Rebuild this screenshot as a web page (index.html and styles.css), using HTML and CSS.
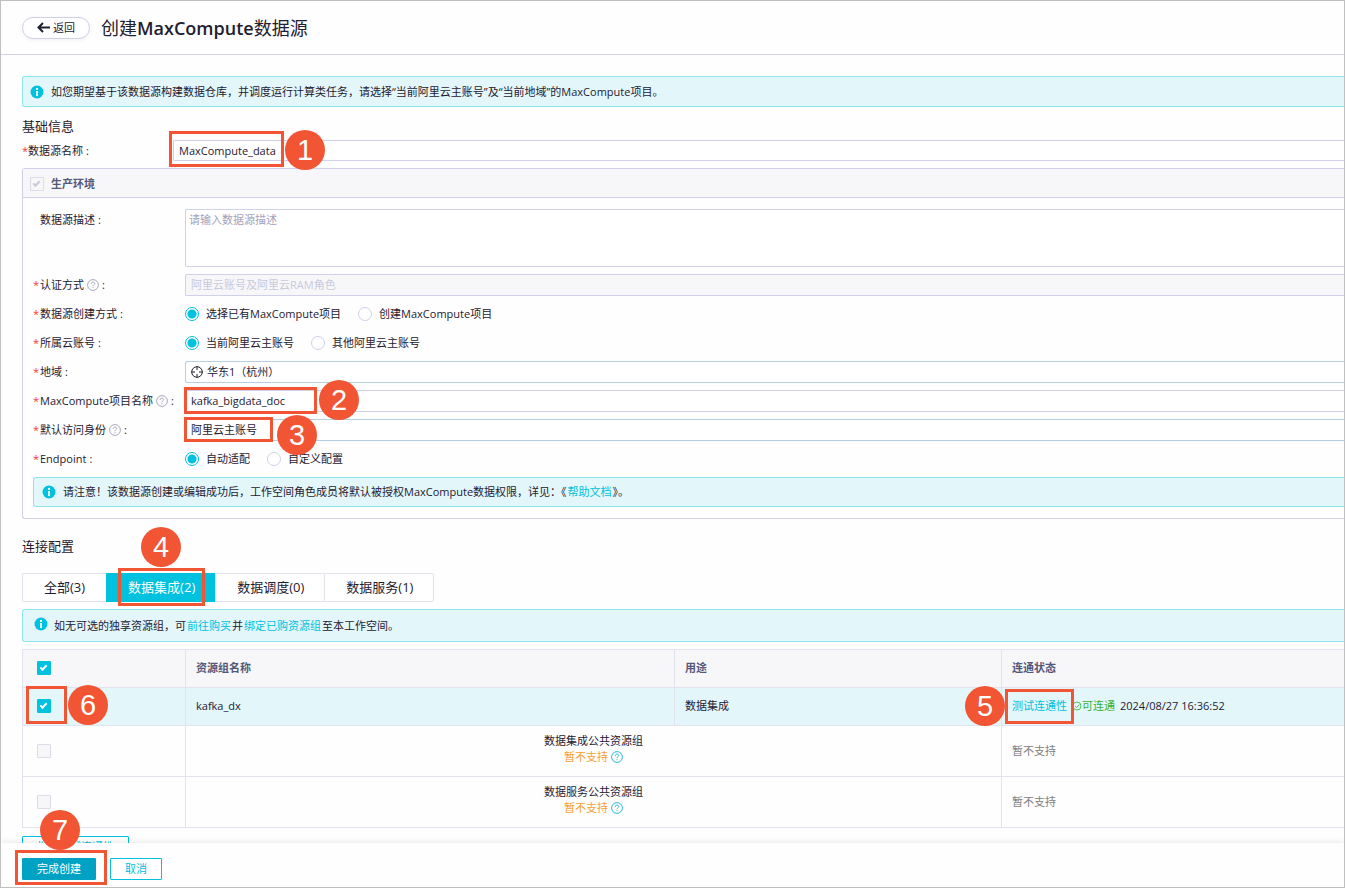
FILE: index.html
```html
<!DOCTYPE html>
<html lang="zh-CN">
<head>
<meta charset="utf-8">
<title>创建MaxCompute数据源</title>
<link rel="stylesheet" href="styles.css">
</head>
<body>
<svg class="defs" aria-hidden="true">
  <symbol id="info" viewBox="0 0 14 14"><circle cx="7" cy="7" r="6.5" fill="#00c1de"/><path d="M6 3h2v2H6zM6 6h2v5H6z" fill="#e3f7fb"/></symbol>
  <symbol id="help" viewBox="0 0 12 12"><circle cx="6" cy="6" r="5.400" fill="none" stroke="currentColor"/><path d="M4.300 4.900C4.300 3.700 5 3.100 6 3.100s1.700.6 1.700 1.500C7.700 5.700 6 5.800 6 7.200M6 8.200v1" fill="none" stroke="currentColor"/></symbol>
</svg>
<div class="app">
  <header class="header">
    <button class="back" type="button">
      <svg width="13" height="11" viewBox="0 0 13 11"><path d="M6 1 1.500 5.500 6 10M2 5.500h11" fill="none" stroke="#1f2030" stroke-width="2"/></svg>返回</button>
    <h1 class="title">创建<span class="product">MaxCompute</span>数据源</h1>
  </header>

  <main class="content">
    <div class="alert alert-top"><svg class="info"><use href="#info"/></svg><span>如您期望基于该数据源构建数据仓库，并调度运行计算类任务，请选择“当前阿里云主账号”及“当前地域”的MaxCompute项目。</span></div>

    <h2 class="section">基础信息</h2>
    <div class="name-row">
      <label class="label" for="name"><i class="star">*</i>数据源名称<span class="colon">:</span></label>
      <div class="field">
        <input class="control" id="name" type="text" value="MaxCompute_data">
        <span class="box box-name"></span><span class="dot dot-name">1</span>
      </div>
    </div>

    <section class="panel">
      <div class="panel-head">
        <input class="check" type="checkbox" id="prod" checked disabled><label for="prod">生产环境</label>
      </div>
      <div class="form">
        <div class="row">
          <label class="label" for="desc"><i class="star"></i>数据源描述<span class="colon">:</span></label>
          <div class="field"><textarea class="control area" id="desc" placeholder="请输入数据源描述"></textarea></div>
        </div>
        <div class="row">
          <label class="label" for="auth"><i class="star">*</i>认证方式<svg class="help"><use href="#help"/></svg><span class="colon">:</span></label>
          <div class="field"><select class="control" id="auth" disabled><option>阿里云账号及阿里云RAM角色</option></select></div>
        </div>
        <div class="row" role="radiogroup" aria-labelledby="mode-label">
          <span class="label" id="mode-label"><i class="star">*</i>数据源创建方式<span class="colon">:</span></span>
          <div class="radios">
            <label class="option"><input class="radio" type="radio" name="mode" checked>选择已有MaxCompute项目</label>
            <label class="option"><input class="radio" type="radio" name="mode">创建MaxCompute项目</label>
          </div>
        </div>
        <div class="row" role="radiogroup" aria-labelledby="account-label">
          <span class="label" id="account-label"><i class="star">*</i>所属云账号<span class="colon">:</span></span>
          <div class="radios">
            <label class="option"><input class="radio" type="radio" name="account" checked>当前阿里云主账号</label>
            <label class="option"><input class="radio" type="radio" name="account">其他阿里云主账号</label>
          </div>
        </div>
        <div class="row">
          <label class="label" for="region"><i class="star">*</i>地域<span class="colon">:</span></label>
          <div class="field">
            <select class="control linked region" id="region"><option>华东1（杭州）</option></select>
            <svg class="target" viewBox="0 0 12 12"><circle cx="6" cy="6" r="5.300"/><path d="M6 .5v3.500M6 8v3.500M.5 6H4M8 6h3.500"/></svg>
          </div>
        </div>
        <div class="row">
          <label class="label" for="project"><i class="star">*</i>MaxCompute项目名称<svg class="help"><use href="#help"/></svg><span class="colon">:</span></label>
          <div class="field">
            <select class="control" id="project"><option>kafka_bigdata_doc</option></select>
            <span class="box box-project"></span><span class="dot dot-project">2</span>
          </div>
        </div>
        <div class="row">
          <label class="label" for="identity"><i class="star">*</i>默认访问身份<svg class="help"><use href="#help"/></svg><span class="colon">:</span></label>
          <div class="field">
            <select class="control linked" id="identity"><option>阿里云主账号</option></select>
            <span class="box box-identity"></span><span class="dot dot-identity">3</span>
          </div>
        </div>
        <div class="row" role="radiogroup" aria-labelledby="endpoint-label">
          <span class="label" id="endpoint-label"><i class="star">*</i>Endpoint<span class="colon">:</span></span>
          <div class="radios">
            <label class="option"><input class="radio" type="radio" name="endpoint" checked>自动适配</label>
            <label class="option"><input class="radio" type="radio" name="endpoint">自定义配置</label>
          </div>
        </div>
        <div class="alert alert-form"><svg class="info"><use href="#info"/></svg><span>请注意！该数据源创建或编辑成功后，工作空间角色成员将默认被授权MaxCompute数据权限，详见：《<a class="link" href="#help-doc">帮助文档</a>》。</span></div>
      </div>
    </section>

    <h2 class="section section-link">连接配置</h2>
    <div class="tabs">
      <button class="tab" type="button">全部(3)</button>
      <button class="tab active" type="button">数据集成(2)<span class="box box-tab"></span><span class="dot dot-tab">4</span></button>
      <button class="tab" type="button">数据调度(0)</button>
      <button class="tab" type="button">数据服务(1)</button>
    </div>
    <div class="alert alert-group"><svg class="info"><use href="#info"/></svg><span>如无可选的独享资源组，可<a class="link" href="#buy">前往购买</a>并<a class="link" href="#bind">绑定已购资源组</a>至本工作空间。</span></div>

    <table class="table">
      <colgroup><col class="col-check"><col class="col-name"><col class="col-use"><col></colgroup>
      <thead>
        <tr><th><input class="check" type="checkbox" aria-label="全选" checked></th><th>资源组名称</th><th>用途</th><th>连通状态</th></tr>
      </thead>
      <tbody>
        <tr class="selected">
          <td><div class="anchor"><input class="check" type="checkbox" aria-label="kafka_dx" checked><span class="box box-check"></span><span class="dot dot-check">6</span></div></td>
          <td>kafka_dx</td>
          <td>数据集成</td>
          <td><div class="anchor status"><a class="test" href="#test">测试连通性</a><svg class="ok" viewBox="0 0 10 10"><circle cx="5" cy="5" r="4"/><path d="m3 5 1.500 1.500L7.500 3.500"/></svg><span class="reach">可连通</span><span>2024/08/27 16:36:52</span><span class="box box-test"></span><span class="dot dot-test">5</span></div></td>
        </tr>
        <tr class="public">
          <td><input class="check" type="checkbox" aria-label="数据集成公共资源组" disabled></td>
          <td class="merged" colspan="2">数据集成公共资源组<div class="warn">暂不支持<svg class="help"><use href="#help"/></svg></div></td>
          <td class="muted">暂不支持</td>
        </tr>
        <tr class="public">
          <td><input class="check" type="checkbox" aria-label="数据服务公共资源组" disabled></td>
          <td class="merged" colspan="2">数据服务公共资源组<div class="warn">暂不支持<svg class="help"><use href="#help"/></svg></div></td>
          <td class="muted">暂不支持</td>
        </tr>
      </tbody>
    </table>
    <button class="btn batch" type="button">批量测试连通性</button>
  </main>

  <footer class="footer">
    <div class="anchor"><button class="btn primary" type="button">完成创建</button><span class="box box-submit"></span><span class="dot dot-submit">7</span></div>
    <button class="btn" type="button">取消</button>
  </footer>
</div>
</body>
</html>
```
FILE: styles.css
```css
* { box-sizing: border-box; }
body {
  margin: 0;
  background: #fefefe;
  color: #1f2030;
  font: 11px/16px "Open Sans", "Noto Sans CJK SC", sans-serif;
}
button, input, select, textarea { font: inherit; color: inherit; margin: 0; }
a { text-decoration: none; }
.defs { position: absolute; width: 0; height: 0; }

.app {
  display: flex;
  flex-direction: column;
  height: 100vh;
  border: 1px solid #c0c0c0;
  overflow: hidden;
}

.header {
  display: flex;
  align-items: center;
  gap: 11px;
  flex: none;
  height: 54px;
  padding-left: 21px;
  border-bottom: 1px solid #d0d3e8;
}
.back {
  display: flex;
  align-items: center;
  justify-content: center;
  gap: 3px;
  width: 68px;
  height: 22px;
  padding: 0;
  border: 1px solid #d0d0e8;
  border-radius: 11px;
  background: #fff;
  box-shadow: 0 1px 4px #0000000f;
}
.title { margin: 0; font-size: 18px; line-height: 26px; font-weight: 400; }
.product { font-weight: 600; }

.content {
  flex: 1;
  min-height: 0;
  padding: 21px 0 0 21px;
  overflow: auto;
  scrollbar-width: none;
}

.alert {
  display: flex;
  align-items: center;
  border: 1px solid #8fe5ee;
  border-right: 0;
  border-radius: 3px 0 0 3px;
  background: #e3f7fb;
}
.alert-top { height: 31px; padding-left: 7px; gap: 7px; }
.alert-form { height: 30px; margin-left: 10px; padding-left: 8px; gap: 7px; }
.alert-group { height: 33px; margin: 7px 0; padding-left: 11px; gap: 6px; }
.alert-group .info { margin-bottom: 3px; }
.info { flex: none; width: 14px; height: 14px; }
.link { margin: 0 1px; color: #00c1de; }

.section { margin: 10px 0 5px; font-size: 13px; line-height: 18px; font-weight: 400; }
.section-link { margin: 18px 0; }

.name-row { display: flex; height: 21px; margin-bottom: 7px; }
.name-row .label { width: 151px; height: 21px; }
.name-row .star { width: 6px; }
.name-row .control { height: 21px; }
.label { display: flex; align-items: center; flex: none; width: 152px; height: 22px; }
.star { width: 7px; color: #f53b3b; font-style: normal; }
.colon { margin-left: 3px; }
.help { width: 12px; height: 12px; margin-left: 3px; color: #a9a9bd; }
.field { position: relative; flex: 1; }

.control {
  display: block;
  width: 100%;
  height: 22px;
  padding: 0 5px;
  border: 1px solid #d0d0e8;
  border-right: 0;
  border-radius: 2px 0 0 2px;
  background: #fff;
  appearance: none;
  outline: none;
}
.control.linked { border-color: #b5cfe0; }
.control.region { padding-left: 21px; }
.control:disabled { background: #f7f7f9; color: #c9c9dc; opacity: 1; }
.control.area { height: 58px; padding: 2px 3px; resize: none; }
.area::placeholder { color: #a0a3bb; opacity: 1; }
.target {
  position: absolute;
  left: 6px;
  top: 5px;
  width: 12px;
  height: 12px;
  fill: none;
  stroke: #1f2030;
}

.panel { border: 1px solid #d0d0e8; border-right: 0; border-radius: 3px 0 0 3px; }
.panel-head {
  display: flex;
  align-items: center;
  gap: 7px;
  height: 29px;
  padding: 1px 0 0 7px;
  border-bottom: 1px solid #d0d0e8;
  background: #f7f7f9;
  color: #55587a;
  font-weight: 600;
}
.form { display: flex; flex-direction: column; gap: 7px; padding: 11px 0; }
.row { display: flex; padding-left: 10px; }

.radios { display: flex; align-items: center; gap: 17px; height: 21px; }
.option { display: flex; align-items: center; gap: 7px; }
.radio {
  width: 14px;
  height: 14px;
  border: 1px solid #d0d0e8;
  border-radius: 50%;
  background: #fff;
  appearance: none;
}
.radio:checked {
  border-color: #00c1de;
  background: radial-gradient(circle, #00c1de 4px, #fff 5px);
}

.check {
  display: block;
  width: 14px;
  height: 14px;
  border: 1px solid #dcdce8;
  border-radius: 1px;
  background: #f7f7f9;
  color: #c9c9dc;
  appearance: none;
}
.check:checked::before {
  content: "";
  display: block;
  width: 5px;
  height: 2px;
  margin: 3px 0 0 2px;
  border: solid currentColor;
  border-width: 0 0 2px 2px;
  transform: rotate(-45deg);
}
.check:checked:enabled { border-color: #00c1de; background: #00c1de; color: #fff; }

.tabs { display: flex; height: 29px; }
.tab {
  position: relative;
  padding: 0 20px 2px 21px;
  border: 1px solid #e3e3f0;
  border-right: 0;
  background: #fff;
  font-size: 13px;
}
.tab:first-child { padding-right: 21px; border-radius: 2px 0 0 2px; }
.tab:last-child { border-right: 1px solid #e3e3f0; border-radius: 0 2px 2px 0; }
.tab.active { border-color: #00c1de; background: #00c1de; color: #fff; }

.table { width: 100%; border-collapse: collapse; table-layout: fixed; }
.col-check { width: 163px; }
.col-name { width: 489px; }
.col-use { width: 327px; }
.table th, .table td {
  height: 38px;
  padding: 0 10px 1px;
  border: 1px solid #e3e3f0;
  text-align: left;
  font-weight: 400;
}
.table th { background: #f7f7f9; color: #55587a; font-weight: 600; }
.table th:first-child, .table td:first-child { padding-left: 14px; }
.table th:last-child, .table td:last-child { border-right: 0; }
.selected { background: #e3f7fb; }
.table .public td { height: 51px; padding-bottom: 0; }
.table .public .merged { padding-bottom: 5px; text-align: center; }
.warn { display: flex; align-items: center; justify-content: center; color: #f5a033; }
.warn .help { color: #2cb9dc; }
.table .muted { color: #808080; }
.anchor { position: relative; }
.status { display: flex; align-items: center; }
.test { color: #00c1de; }
.ok { width: 10px; height: 10px; margin-left: 5px; fill: none; stroke: #57c25a; }
.reach { margin-right: 5px; color: #35b034; }

.btn {
  height: 22px;
  padding: 0 14px;
  border: 1px solid #00c1de;
  border-radius: 1px;
  background: #fff;
  color: #00c1de;
}
.btn.primary { border-color: #00a2c4; background: #00a2c4; color: #fff; }
.batch { margin-top: 8px; }

.footer {
  position: relative;
  display: flex;
  align-items: center;
  flex: none;
  gap: 14px;
  height: 44px;
  padding: 7px 21px 0;
  background: #fefefe;
  box-shadow: 0 -1px 6px #00000018;
}

/* Step markers laid over the controls they describe */
.box { position: absolute; z-index: 1; border: 3px solid #f15533; pointer-events: none; }
.dot {
  position: absolute;
  z-index: 2;
  width: 40px;
  height: 40px;
  border-radius: 50%;
  background: #f15533;
  color: #fff;
  font: 29px/40px "Liberation Sans", Arial, sans-serif;
  text-align: center;
  pointer-events: none;
}
.box-name { left: -4px; top: -9px; width: 115px; height: 36px; }
.dot-name { left: 112px; top: -10px; }
.box-project { left: -1px; top: -3px; width: 133px; height: 27px; }
.dot-project { left: 134px; top: -10px; }
.box-identity { left: -1px; top: -2px; width: 89px; height: 25px; }
.dot-identity { left: 92px; top: -4px; }
.box-tab { left: 11px; top: -6px; width: 87px; height: 38px; }
.dot-tab { left: 34px; top: -47px; }
.box-check { left: -11px; top: -13px; width: 41px; height: 38px; }
.dot-check { left: 31px; top: -14px; }
.box-test { left: -7px; top: -9px; width: 69px; height: 35px; }
.dot-test { left: -47px; top: -12px; }
.box-submit { left: -7px; top: -8px; width: 92px; height: 35px; }
.dot-submit { left: 18px; top: -48px; }
```
